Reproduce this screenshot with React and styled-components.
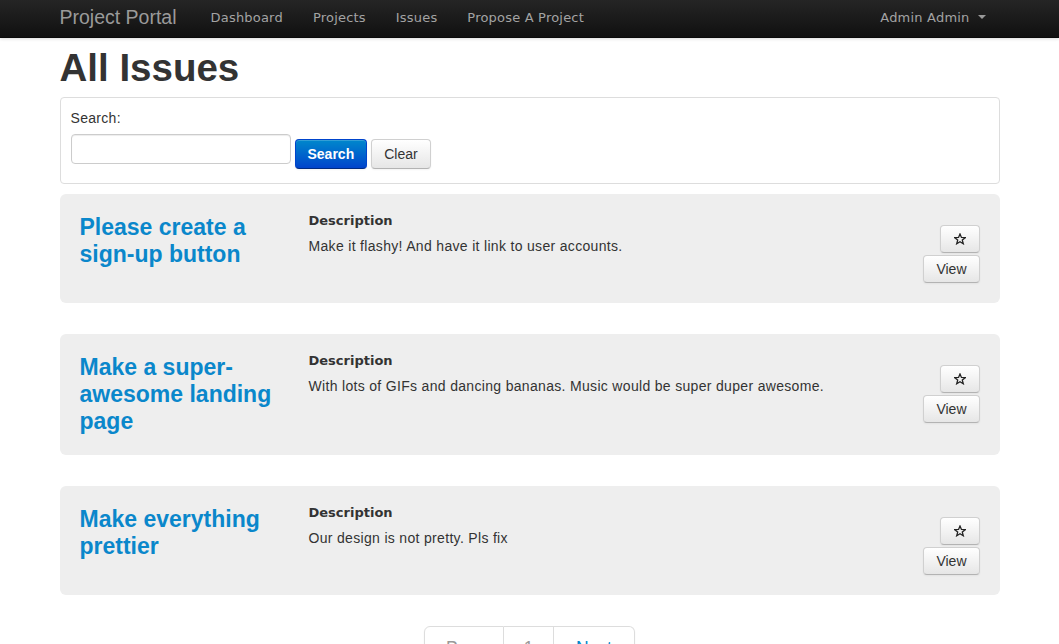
import React from "react";
import styled, { createGlobalStyle } from "styled-components";

const GlobalStyle = createGlobalStyle`
  html, body {
    margin: 0;
    padding: 0;
    background: #fff;
  }
  body {
    font-family: "Liberation Sans", Arial, sans-serif;
    font-size: 14px;
    line-height: 20px;
    color: #333;
  }
  * {
    box-sizing: border-box;
  }
`;

const Navbar = styled.div`
  height: 38px;
  background: linear-gradient(to bottom, #252525, #101010);
  border-bottom: 1px solid #0a0a0a;
  box-shadow: 0 1px 3px rgba(0, 0, 0, 0.15);
`;

const NavInner = styled.div`
  width: 940px;
  margin: 0 auto;
  height: 100%;
  display: flex;
  align-items: center;
`;

const Brand = styled.a`
  font-family: "Liberation Sans", Arial, sans-serif;
  font-size: 19.5px;
  font-weight: 200;
  color: #9a9a9a;
  margin-right: 34px;
  margin-top: -3px;
`;

const NavLinks = styled.div`
  display: flex;
  gap: 30px;
  margin-top: -1px;
`;

const NavLink = styled.a`
  font-family: "DejaVu Sans", Verdana, sans-serif;
  font-size: 13px;
  letter-spacing: 0.2px;
  color: #a3a3a3;
  text-decoration: none;
`;

const UserMenu = styled.a`
  margin-left: auto;
  margin-right: 14px;
  margin-top: -1px;
  font-family: "DejaVu Sans", Verdana, sans-serif;
  font-size: 13px;
  letter-spacing: 0.2px;
  color: #a3a3a3;
  display: flex;
  align-items: center;
  gap: 8px;
`;

const Caret = styled.span`
  width: 0;
  height: 0;
  border-left: 4px solid transparent;
  border-right: 4px solid transparent;
  border-top: 4px solid #999;
  margin-top: -2px;
`;

const Container = styled.div`
  width: 940px;
  margin: 0 auto;
`;

const Title = styled.h1`
  font-family: "Liberation Sans", Arial, sans-serif;
  font-size: 38.5px;
  font-weight: bold;
  line-height: 40px;
  margin: 10px 0 9px;
  color: #333;
`;

const Well = styled.form`
  border: 1px solid #ddd;
  border-radius: 4px;
  padding: 10px 10px 14px;
  margin-bottom: 10px;
`;

const Label = styled.label`
  display: block;
  margin: 0 0 6px;
  letter-spacing: 0.3px;
`;

const SearchRow = styled.div`
  display: flex;
  align-items: flex-end;
  gap: 4px;
`;

const Input = styled.input`
  width: 220px;
  height: 30px;
  border: 1px solid #ccc;
  border-radius: 4px;
  box-shadow: inset 0 1px 1px rgba(0, 0, 0, 0.075);
  padding: 4px 6px;
  font-size: 14px;
  margin-bottom: 5px;
`;

const Button = styled.button`
  font-family: "Liberation Sans", Arial, sans-serif;
  font-size: 14px;
  line-height: 20px;
  height: 30px;
  padding: 4px 12px;
  border-radius: 4px;
  cursor: pointer;
  display: inline-flex;
  align-items: center;
  justify-content: center;
  color: ${(p) => (p.$primary ? "#fff" : "#333")};
  font-weight: ${(p) => (p.$primary ? "bold" : "normal")};
  border: 1px solid;
  border-color: ${(p) =>
    p.$primary ? "#0044cc #0044cc #002a80" : "#d0d0d0 #d0d0d0 #b3b3b3"};
  background: ${(p) =>
    p.$primary
      ? "linear-gradient(to bottom, #0088cc, #0044cc)"
      : "linear-gradient(to bottom, #ffffff, #e6e6e6)"};
  box-shadow: inset 0 1px 0 rgba(255, 255, 255, 0.2), 0 1px 2px rgba(0, 0, 0, 0.05);
`;

const Card = styled.div`
  background: #eee;
  border-radius: 6px;
  padding: 20px;
  margin-bottom: 31px;
  display: grid;
  grid-template-columns: 209px 1fr auto;
  column-gap: 20px;
`;

const IssueTitle = styled.a`
  font-family: "Liberation Sans", Arial, sans-serif;
  font-size: 23px;
  font-weight: bold;
  line-height: 27px;
  color: #0a87cb;
  text-decoration: none;
`;

const DescHead = styled.div`
  font-family: "DejaVu Sans", Verdana, sans-serif;
  font-size: 13px;
  font-weight: bold;
  color: #333;
  margin-top: -3px;
  margin-bottom: 5px;
`;

const DescText = styled.div`
  letter-spacing: 0.32px;
`;

const Actions = styled.div`
  display: flex;
  flex-direction: column;
  align-items: flex-end;
  gap: 2px;
  padding-top: 11px;
`;

const SmallButton = styled(Button)`
  height: 28px;
  padding: 3px 12px;
  min-width: ${(p) => (p.$icon ? "40px" : "auto")};
`;

const Pagination = styled.div`
  display: flex;
  justify-content: center;
`;

const PageList = styled.ul`
  display: flex;
  list-style: none;
  margin: 0;
  padding: 0;
  border-radius: 6px;
  box-shadow: 0 1px 2px rgba(0, 0, 0, 0.05);
`;

const PageItem = styled.li`
  font-size: 17.5px;
  line-height: 20px;
  padding: 11px 0;
  border: 1px solid #ddd;
  border-left-width: ${(p) => (p.$first ? "1px" : "0")};
  color: ${(p) => (p.$link ? "#0088cc" : "#999")};
  background: #fff;
  border-radius: ${(p) => (p.$first ? "6px 0 0 6px" : p.$last ? "0 6px 6px 0" : "0")};
  width: ${(p) => p.$w}px;
  text-align: center;
`;

const StarIcon = () => (
  <svg width="12" height="12" viewBox="0 0 24 24" fill="none" stroke="#222" strokeWidth="2.6" strokeLinejoin="miter">
    <polygon points="12,2 14.9,8.9 22.5,9.3 16.6,14.1 18.6,21.5 12,17.4 5.4,21.5 7.4,14.1 1.5,9.3 9.1,8.9" />
  </svg>
);

const issues = [
  {
    title: "Please create a sign-up button",
    desc: "Make it flashy! And have it link to user accounts.",
  },
  {
    title: "Make a super-awesome landing page",
    desc: "With lots of GIFs and dancing bananas. Music would be super duper awesome.",
  },
  {
    title: "Make everything prettier",
    desc: "Our design is not pretty. Pls fix",
  },
];

export default function App() {
  return (
    <>
      <GlobalStyle />
      <Navbar>
        <NavInner>
          <Brand>Project Portal</Brand>
          <NavLinks>
            <NavLink>Dashboard</NavLink>
            <NavLink>Projects</NavLink>
            <NavLink>Issues</NavLink>
            <NavLink>Propose A Project</NavLink>
          </NavLinks>
          <UserMenu>
            Admin Admin <Caret />
          </UserMenu>
        </NavInner>
      </Navbar>
      <Container>
        <Title>All Issues</Title>
        <Well onSubmit={(e) => e.preventDefault()}>
          <Label>Search:</Label>
          <SearchRow>
            <Input type="text" />
            <Button $primary type="submit">Search</Button>
            <Button type="button">Clear</Button>
          </SearchRow>
        </Well>
        {issues.map((issue) => (
          <Card key={issue.title}>
            <IssueTitle>{issue.title}</IssueTitle>
            <div>
              <DescHead>Description</DescHead>
              <DescText>{issue.desc}</DescText>
            </div>
            <Actions>
              <SmallButton $icon aria-label="Star">
                <StarIcon />
              </SmallButton>
              <SmallButton>View</SmallButton>
            </Actions>
          </Card>
        ))}
        <Pagination>
          <PageList>
            <PageItem $first $w={80}>Prev</PageItem>
            <PageItem $w={50}>1</PageItem>
            <PageItem $last $link $w={81}>Next</PageItem>
          </PageList>
        </Pagination>
      </Container>
    </>
  );
}
